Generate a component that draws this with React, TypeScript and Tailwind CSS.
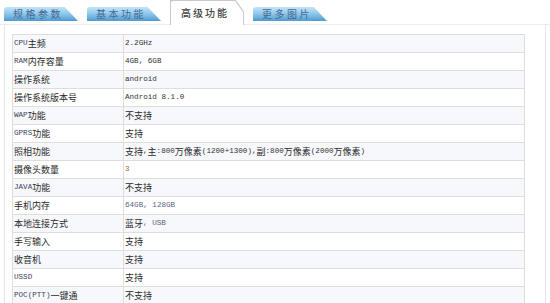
import React from "react";

const rows: [string, string][] = [
  ["CPU主频", "2.2GHz"],
  ["RAM内存容量", "4GB, 6GB"],
  ["操作系统", "android"],
  ["操作系统版本号", "Android 8.1.0"],
  ["WAP功能", "不支持"],
  ["GPRS功能", "支持"],
  ["照相功能", "支持,主:800万像素(1200+1300),副:800万像素(2000万像素)"],
  ["摄像头数量", "3"],
  ["JAVA功能", "不支持"],
  ["手机内存", "64GB, 128GB"],
  ["本地连接方式", "蓝牙, USB"],
  ["手写输入", "支持"],
  ["收音机", "支持"],
  ["USSD", "支持"],
  ["POC(PTT)一键通", "不支持"],
];

function Mixed({ text, latinClass }: { text: string; latinClass: string }) {
  const parts = text.split(/([\u4e00-\u9fff]+)/).filter((p) => p.length > 0);
  return (
    <>
      {parts.map((p, i) =>
        /[\u4e00-\u9fff]/.test(p) ? (
          <span key={i} className="text-[9px] text-[#2a2a2a] [font-family:'Noto_Sans_CJK_SC',sans-serif]">
            {p}
          </span>
        ) : (
          <span key={i} className={latinClass}>
            {p}
          </span>
        )
      )}
    </>
  );
}

function BlueTab({ label, ml }: { label: string; ml: string }) {
  return (
    <div
      className={`${ml} h-[14px] w-[74px] rounded-tl-[3px] bg-gradient-to-b from-[#c4e4f7] via-[#8cc6ea] to-[#4f9ad0] [clip-path:polygon(0_0,82%_0,100%_100%,0_100%)] flex items-center pl-[9px] mb-[3px]`}
    >
      <span className="text-[10px] leading-none tracking-[2.5px] text-[#46698f] [font-family:'Noto_Sans_CJK_SC',sans-serif]">
        {label}
      </span>
    </div>
  );
}

export default function App() {
  return (
    <div className="w-[550px] h-[303px] overflow-hidden bg-white">
      <div className="flex items-end h-[25px] border-b border-[#ececec]">
        <BlueTab label="规格参数" ml="ml-[4px]" />
        <BlueTab label="基本功能" ml="ml-[9px]" />
        <div className="ml-[9px] h-[25px] w-[74px] bg-[#c9c9c9] [clip-path:polygon(0_0,89%_0,100%_46%,100%_100%,0_100%)] pt-[1px] pl-[1px] pr-[1px] -mb-[1px]">
          <div className="h-full w-full bg-white [clip-path:polygon(0_0,89%_0,100%_46%,100%_100%,0_100%)] rounded-tl-[2px] flex items-center pl-[10px]">
            <span className="text-[10px] leading-none tracking-[2px] text-[#444] font-medium [font-family:'Noto_Sans_CJK_SC',sans-serif]">
              高级功能
            </span>
          </div>
        </div>
        <BlueTab label="更多图片" ml="ml-[9px]" />
      </div>
      <div className="ml-[4px] w-[542px] h-[300px] border-l border-r border-[#e6e6e6] pt-[9px] pl-[7px]">
        <div className="w-[513px] border-t border-l border-r border-[#dedede]">
          {rows.map(([k, v], i) => (
            <div
              key={k}
              className={`flex h-[18px] border-b border-[#dedede] ${i % 2 === 0 ? "bg-[#f7f8fc]" : "bg-white"}`}
            >
              <div className="w-[111px] border-r border-[#dedede] flex items-center pl-[1px] whitespace-nowrap">
                <Mixed text={k} latinClass="text-[7.6px] text-[#3c4460] [font-family:'Liberation_Mono',monospace]" />
              </div>
              <div className="flex-1 flex items-center pl-[1px] whitespace-nowrap">
                <Mixed
                  text={v}
                  latinClass={`text-[7.6px] [font-family:'Liberation_Mono',monospace] ${
                    k === "摄像头数量" ? "text-[#a06a3a]" : k === "手机内存" || k === "本地连接方式" ? "text-[#5a6480]" : "text-[#333]"
                  }`}
                />
              </div>
            </div>
          ))}
        </div>
      </div>
    </div>
  );
}
